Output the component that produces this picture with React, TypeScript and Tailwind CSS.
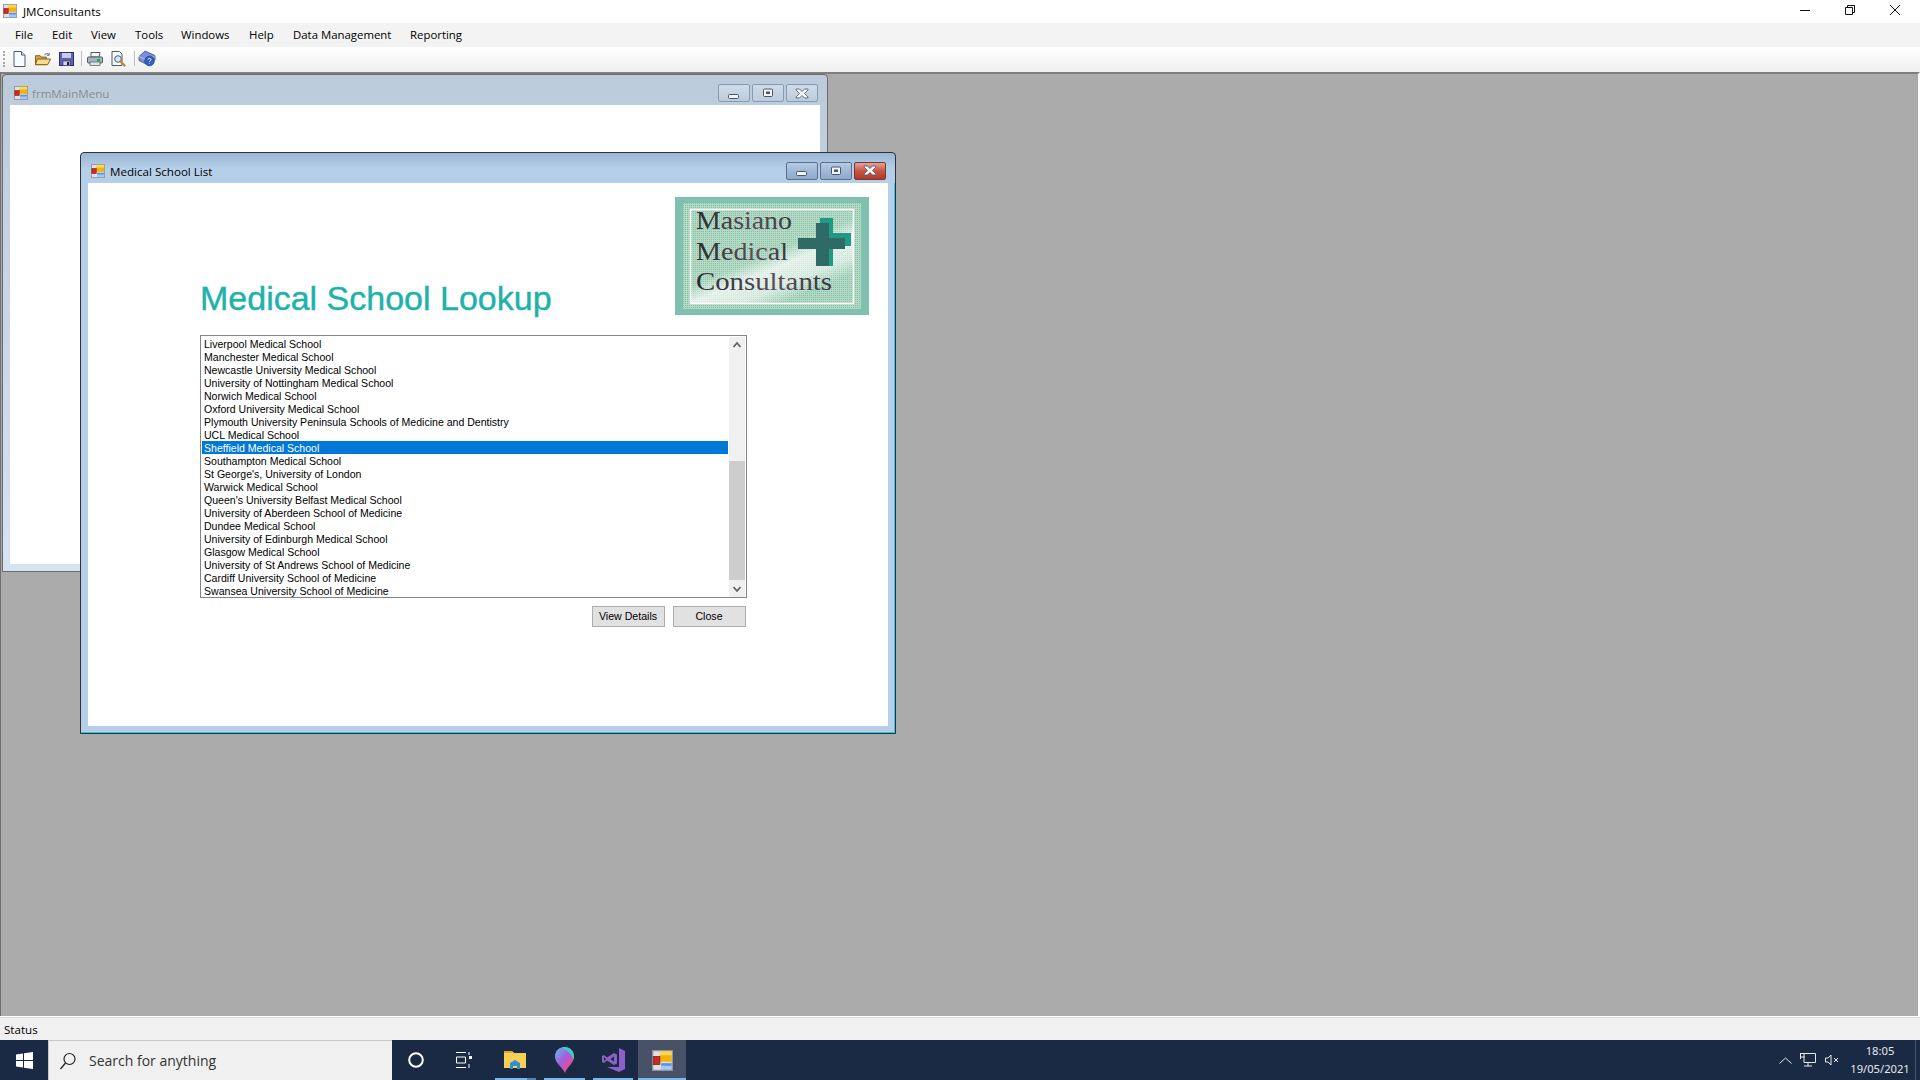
import React from "react";

const schools = [
  "Liverpool Medical School",
  "Manchester Medical School",
  "Newcastle University Medical School",
  "University of Nottingham Medical School",
  "Norwich Medical School",
  "Oxford University Medical School",
  "Plymouth University Peninsula Schools of Medicine and Dentistry",
  "UCL Medical School",
  "Sheffield Medical School",
  "Southampton Medical School",
  "St George's, University of London",
  "Warwick Medical School",
  "Queen's University Belfast Medical School",
  "University of Aberdeen School of Medicine",
  "Dundee Medical School",
  "University of Edinburgh Medical School",
  "Glasgow Medical School",
  "University of St Andrews School of Medicine",
  "Cardiff University School of Medicine",
  "Swansea University School of Medicine",
];

const menus: [string, string][] = [
  ["File", "w-[37px]"],
  ["Edit", "w-[39px]"],
  ["View", "w-[44px]"],
  ["Tools", "w-[46px]"],
  ["Windows", "w-[68px]"],
  ["Help", "w-[44px]"],
  ["Data Management", "w-[117px]"],
  ["Reporting", "w-[80px]"],
];

function AppIcon({ size = 14 }: { size?: number }) {
  return (
    <svg width={size} height={size} viewBox="0 0 16 16" className="shrink-0">
      <rect x="0.5" y="0.5" width="15" height="15" fill="#dfe1e4" stroke="#8f9499" />
      <rect x="6" y="1" width="9" height="8" fill="#f2b40c" />
      <rect x="6" y="1" width="9" height="3" fill="#f9d75a" />
      <rect x="1" y="5" width="5" height="6" fill="#cc2a20" stroke="#8d1a14" strokeWidth="0.6" />
      <rect x="7" y="10" width="8" height="5" fill="#5b93e3" />
      <rect x="7" y="12" width="8" height="3" fill="#a7c8f2" />
    </svg>
  );
}

function CaptionGlyph({ kind, dim }: { kind: "min" | "max" | "close"; dim?: boolean }) {
  const stroke = dim ? "#5f6d85" : "#465570";
  if (kind === "min")
    return (
      <svg width="12" height="8" viewBox="0 0 12 8" className="mt-[7px]">
        <rect x="0.5" y="1.5" width="10" height="4" rx="1" fill="#f3f4f6" stroke={stroke} />
      </svg>
    );
  if (kind === "max")
    return (
      <svg width="12" height="10" viewBox="0 0 12 10">
        <rect x="1.5" y="1" width="9" height="7.5" rx="1" fill="#f3f4f6" stroke={stroke} />
        <rect x="4" y="3.5" width="4" height="2.5" fill={stroke} />
      </svg>
    );
  return (
    <svg width="14" height="11" viewBox="0 0 14 11">
      <path
        d="M1 1h3.5L7 3.5 9.5 1H13v1l-3.5 3.5L13 9v1H9.5L7 7.5 4.5 10H1V9l3.5-3.5L1 2z"
        fill="#f3f4f6"
        stroke={stroke}
        strokeWidth="0.8"
      />
    </svg>
  );
}

function CaptionButtons({ active }: { active?: boolean }) {
  const base =
    "h-[18px] w-[32px] rounded-[2px] border flex items-center justify-center";
  const normal = active
    ? "border-[#5a6f8f] bg-gradient-to-b from-[#b5cbe3] via-[#9fb8d5] to-[#8eabcc]"
    : "border-[#8a9ab3] bg-gradient-to-b from-[#cfdbe8] to-[#bccbdc]";
  const close = active
    ? "border-[#6f3a3a] bg-gradient-to-b from-[#e2a396] via-[#c8543f] to-[#b23a26]"
    : normal;
  return (
    <div className="flex gap-[2px]">
      <div className={`${base} ${normal}`}>
        <CaptionGlyph kind="min" />
      </div>
      <div className={`${base} ${normal}`}>
        <CaptionGlyph kind="max" />
      </div>
      <div className={`${base} ${close}`}>
        <CaptionGlyph kind="close" />
      </div>
    </div>
  );
}

function Logo() {
  return (
    <svg width="194" height="118" viewBox="0 0 194 118" className="block">
      <defs>
        <pattern id="dots" width="2" height="2" patternUnits="userSpaceOnUse">
          <rect width="2" height="2" fill="#b4d9c5" />
          <rect width="1" height="1" fill="#80c0a2" />
        </pattern>
        <linearGradient id="sheen" x1="0.2" y1="0.1" x2="0.85" y2="1">
          <stop offset="0" stopColor="#ffffff" stopOpacity="0" />
          <stop offset="0.42" stopColor="#ffffff" stopOpacity="0.05" />
          <stop offset="0.55" stopColor="#ffffff" stopOpacity="0.7" />
          <stop offset="0.72" stopColor="#ffffff" stopOpacity="0.55" />
          <stop offset="0.85" stopColor="#ffffff" stopOpacity="0" />
        </linearGradient>
        <linearGradient id="ink" x1="0" y1="0" x2="1" y2="0">
          <stop offset="0" stopColor="#2b2a30" />
          <stop offset="0.6" stopColor="#5c4c58" />
          <stop offset="1" stopColor="#3a3540" />
        </linearGradient>
      </defs>
      <rect width="194" height="118" fill="#7fc0ae" />
      <rect x="8" y="6" width="178" height="106" fill="url(#dots)" />
      <rect x="15.5" y="12.5" width="163" height="94" fill="url(#dots)" stroke="#ffffff" strokeWidth="1.5" />
      <rect x="16" y="13" width="162" height="93" fill="url(#sheen)" />
      <path d="M145 21h13v15h18v13h-18v20h-13z" fill="#1f9a85" />
      <path d="M141 26h13v15h16v11h-16v17h-13V52h-18V41h18z" fill="#2f6a66" />
      <g fontFamily="'Liberation Serif', serif" fontSize="25" fill="url(#ink)">
        <text x="21" y="32" textLength="96" lengthAdjust="spacingAndGlyphs">Masiano</text>
        <text x="21" y="63" textLength="92" lengthAdjust="spacingAndGlyphs">Medical</text>
        <text x="21" y="93" textLength="136" lengthAdjust="spacingAndGlyphs">Consultants</text>
      </g>
    </svg>
  );
}

function Tool({ children }: { children: React.ReactNode }) {
  return <div className="w-[16px] h-[16px] flex items-center justify-center">{children}</div>;
}

function Toolbar() {
  return (
    <div className="h-[25px] bg-gradient-to-b from-white to-[#efefef] flex items-center pl-[3px] pb-[2px]">
      <div className="w-[2px] h-[16px] border-l-2 border-dotted border-[#a9a9a9] mr-[6px]" />
      <div className="mr-[8px]">
        <Tool>
          <svg width="13" height="16" viewBox="0 0 13 16">
            <path d="M1 .5h7.5L12 4v11.5H1z" fill="#f7fbff" stroke="#4d5b6e" />
            <path d="M8.5.5V4H12" fill="#dde6ef" stroke="#4d5b6e" />
          </svg>
        </Tool>
      </div>
      <div className="mr-[7px]">
        <Tool>
          <svg width="17" height="14" viewBox="0 0 17 14">
            <path d="M.5 3.5h5l1 1.500h5.500v8H.5z" fill="#d9a83e" stroke="#7b5d16" />
            <path d="M2.500 7h14l-3 6H.5z" fill="#f6d98a" stroke="#7b5d16" />
            <path d="M10 3c1-2 3-2 4.500-1M15 .5v2.500h-2.500" fill="none" stroke="#4d5b6e" />
          </svg>
        </Tool>
      </div>
      <div className="mr-[7px]">
        <Tool>
          <svg width="15" height="14" viewBox="0 0 15 14">
            <rect x=".5" y=".5" width="14" height="13" fill="#5f62b5" stroke="#2c2e70" />
            <rect x="3" y="1" width="9" height="5" fill="#c9cbe8" />
            <rect x="4" y="9" width="7" height="4.500" fill="#d8d8d8" stroke="#2c2e70" strokeWidth=".6" />
            <rect x="8" y="10" width="2" height="3" fill="#222" />
          </svg>
        </Tool>
      </div>
      <div className="w-px h-[15px] bg-[#bfbfbf] mr-[5px]" />
      <div className="mr-[8px]">
        <Tool>
          <svg width="16" height="14" viewBox="0 0 16 14">
            <path d="M4 .5h9L12 5H4z" fill="#f4f6f8" stroke="#4d5b6e" />
            <rect x=".5" y="5" width="15" height="6" rx="1" fill="#aab4bf" stroke="#4d5b6e" />
            <rect x="3" y="10" width="10" height="3.500" fill="#dfe3e8" stroke="#4d5b6e" strokeWidth=".7" />
            <rect x="10" y="7" width="3" height="2.500" fill="#17b52c" />
          </svg>
        </Tool>
      </div>
      <div className="mr-[7px]">
        <Tool>
          <svg width="16" height="16" viewBox="0 0 16 16">
            <path d="M1 .5h7.500L11 3v11.500H1z" fill="#f7fbff" stroke="#4d5b6e" />
            <circle cx="7" cy="8" r="3.300" fill="#dbe6ee" stroke="#53606e" />
            <path d="M9.500 10.500l4 4" stroke="#c2852e" strokeWidth="2.400" strokeLinecap="round" />
          </svg>
        </Tool>
      </div>
      <div className="w-px h-[15px] bg-[#bfbfbf] mr-[4px]" />
      <Tool>
        <svg width="18" height="17" viewBox="0 0 18 17" className="shrink-0">
          <path d="M1 6.500L7 1l10 4.500v4L11 15.500 1 10.500z" fill="#7d8fd4" stroke="#3b4a8f" strokeWidth=".8" />
          <path d="M1 6.500l10 5 6-6" fill="none" stroke="#c4cdef" strokeWidth=".8" />
          <circle cx="11.500" cy="11" r="4.800" fill="#2f62c9" stroke="#1e3f8a" strokeWidth=".7" />
          <path d="M10 9.500c.3-1.500 3-1.400 3 .1 0 1.100-1.500 1.100-1.500 2.200M11.500 13.200v.5" fill="none" stroke="#fff" strokeWidth="1" />
        </svg>
      </Tool>
    </div>
  );
}

function MainMenuWindow() {
  return (
    <div className="absolute left-[1px] top-0 w-[826px] h-[498px] rounded-t-[4px] border border-[#6a6a6a] bg-gradient-to-b from-[#bccbdb] to-[#d6e3f0] px-[7px] pb-[7px] flex flex-col">
      <div className="h-[30px] shrink-0 flex items-center justify-between pr-[2px] pt-[6px]">
        <div className="flex items-center gap-[4px] ml-[4px] mt-[1px] font-['Open_Sans',sans-serif] text-[11.6px] text-[#878d95]">
          <AppIcon />
          <span>frmMainMenu</span>
        </div>
        <CaptionButtons />
      </div>
      <div className="flex-1 bg-white" />
    </div>
  );
}

function SchoolList() {
  return (
    <div className="w-[547px] h-[263px] border border-[#82848c] bg-white flex pt-[1px] pl-[1px]">
      <div className="w-[526px] font-['Liberation_Sans',sans-serif] text-[10.55px] leading-[15px] text-black">
        {schools.map((s, i) => (
          <div
            key={s}
            className={`h-[13px] pl-[2px] whitespace-nowrap ${i === 8 ? "bg-[#0078d7] text-white" : ""}`}
          >
            {s}
          </div>
        ))}
      </div>
      <div className="ml-px w-[16px] h-[260px] bg-[#f0f0f0] flex flex-col items-center">
        <svg width="16" height="17" viewBox="0 0 16 17" className="shrink-0">
          <path d="M4.500 10l3.500-4 3.500 4" fill="none" stroke="#606060" strokeWidth="1.700" />
        </svg>
        <div className="mt-[107px] h-[119px] w-full bg-[#cdcdcd]" />
        <svg width="16" height="17" viewBox="0 0 16 17" className="shrink-0">
          <path d="M4.500 7l3.500 4 3.500-4" fill="none" stroke="#606060" strokeWidth="1.700" />
        </svg>
      </div>
    </div>
  );
}

function SchoolWindow() {
  const btn =
    "w-[73px] h-[21px] border border-[#adadad] bg-[#e1e1e1] text-[10.6px] text-black font-['Liberation_Sans',sans-serif] flex items-center justify-center pt-px pr-px";
  return (
    <div className="absolute left-[79px] top-[78px] w-[816px] h-[582px] rounded-t-[4px] border border-[#26323c] bg-gradient-to-b from-[#9cb6d1] via-[#b6cfe9] to-[#b6cfe9] bg-[length:100%_32px] bg-no-repeat flex flex-col">
      <div className="h-[30px] shrink-0 flex items-center justify-between pl-[7px] pr-[9px] pt-[5px]">
        <div className="flex items-center gap-[5px] ml-[3px] mt-[2px] font-['Open_Sans',sans-serif] text-[11.6px] text-black">
          <AppIcon />
          <span>Medical School List</span>
        </div>
        <CaptionButtons active />
      </div>
      <div className="flex-1 bg-[#b6cfe9] pl-[7px] pr-[7px] pb-[7px] flex shadow-[inset_-1px_-1px_0_#2cc8e0]">
        <div className="flex-1 bg-white relative">
          <div className="flex justify-end pt-[14px] pr-[19px]">
            <Logo />
          </div>
          <div className="pl-[112px] -mt-[37px] h-[41px] font-['Liberation_Sans',sans-serif] text-[34px] leading-[41px] text-[#20b2aa] whitespace-nowrap [-webkit-text-stroke:0.4px_#20b2aa]">
            Medical School Lookup
          </div>
          <div className="pl-[112px] mt-[16px]">
            <SchoolList />
            <div className="w-[547px] flex justify-end gap-[8px] mt-[8px] pr-px">
              <div className={btn}>View Details</div>
              <div className={btn}>Close</div>
            </div>
          </div>
        </div>
      </div>
    </div>
  );
}

function Taskbar() {
  return (
    <div className="h-[40px] bg-[#1a2a44] flex items-stretch relative font-['Open_Sans',sans-serif]">
      <div className="w-[48px] flex items-center justify-center">
        <svg width="17" height="17" viewBox="0 0 17 17">
          <path d="M0 2.400l7-1v6.600H0zM8 1.200L17 0v8H8zM0 9h7v6.600l-7-1zM8 9h9v8l-9-1.200z" fill="#ffffff" />
        </svg>
      </div>
      <div className="w-[344px] bg-[#f0f0f0] border-t border-l border-[#c8c8c8] flex items-center pl-[10px]">
        <svg width="18" height="18" viewBox="0 0 18 18">
          <circle cx="10.500" cy="7" r="5.500" fill="none" stroke="#222" strokeWidth="1.200" />
          <path d="M6.500 11L1.500 17" stroke="#222" strokeWidth="1.300" />
        </svg>
        <span className="ml-[12px] text-[14px] text-[#333] whitespace-nowrap">Search for anything</span>
      </div>
      <div className="w-[48px] flex items-center justify-center">
        <svg width="16" height="16" viewBox="0 0 16 16">
          <circle cx="8" cy="8" r="6.800" fill="none" stroke="#ffffff" strokeWidth="2" />
        </svg>
      </div>
      <div className="w-[47px] flex items-center justify-center">
        <svg width="16" height="16" viewBox="0 0 16 16">
          <path d="M0 .5h10M0 15.500h10M.5 5v6h9V5zM13 0v3M13 12v4" fill="none" stroke="#fff" />
          <rect x="13" y="4" width="3" height="3" fill="#fff" />
        </svg>
      </div>
      <div className="w-[41px] ml-[8px] relative flex items-center justify-center pr-[2px]">
        <svg width="24" height="20" viewBox="0 0 24 20">
          <path d="M1 1h8l2 2h12v15H1z" fill="#f6cf57" />
          <path d="M1 1h8l2 2H1z" fill="#e0a82f" />
          <path d="M7 13l5-3 5 3v6h-3v-3h-4v3H7z" fill="#2f8ed8" />
        </svg>
        <div className="absolute left-0 right-[9px] bottom-0 h-[2px] bg-[#76b9ed]" />
        <div className="absolute right-0 w-[9px] bottom-0 h-[2px] bg-[#4f86b0]" />
      </div>
      <div className="w-[41px] ml-[8px] relative flex items-center justify-center pr-[1px]">
        <svg width="19" height="26" viewBox="0 0 19 26">
          <defs>
            <linearGradient id="pin" x1="0" y1="0" x2="1" y2="1">
              <stop offset="0" stopColor="#58c5e8" />
              <stop offset=".45" stopColor="#a45de0" />
              <stop offset=".8" stopColor="#ee4a8f" />
              <stop offset="1" stopColor="#f5a623" />
            </linearGradient>
          </defs>
          <path d="M9.500 0C15 0 19 4 19 9.500 19 16 12 20 10 26 7 20 0 16 0 9.500 0 4 4 0 9.500 0z" fill="url(#pin)" />
          <path d="M9.500 0C15 0 19 4 19 9.500c0 1-.2 2-.5 3C16 6 11 3 7 .4 8 .1 8.700 0 9.500 0z" fill="#35d0c9" />
        </svg>
        <div className="absolute left-0 right-0 bottom-0 h-[2px] bg-[#76b9ed]" />
      </div>
      <div className="w-[40px] ml-[8px] relative flex items-center justify-center">
        <svg width="25" height="24" viewBox="0 0 25 24">
          <path d="M18 0l6 3v18l-6 3L6 19h12zM18 5v10V5z" fill="#8d5fc9" />
          <path d="M1 8l2-1 3 2.500L13 5l3 1.500v9L13 17l-7-4.500L3 15l-2-1z" fill="#8d5fc9" />
          <path d="M3 9v4l2-2zM13 8.500L9.500 11l3.500 2.500z" fill="#1a2a44" />
        </svg>
        <div className="absolute left-0 right-0 bottom-0 h-[2px] bg-[#76b9ed]" />
      </div>
      <div className="w-[48px] ml-[5px] relative bg-[#475268] flex items-center justify-center">
        <AppIcon size={21} />
        <div className="absolute left-0 right-0 bottom-0 h-[2px] bg-[#76b9ed]" />
      </div>
      <div className="flex-1" />
      <div className="w-[20px] flex items-center justify-center">
        <svg width="13" height="7" viewBox="0 0 13 7">
          <path d="M.5 6.500L6.500 1l6 5.500" fill="none" stroke="#e8e8e8" />
        </svg>
      </div>
      <div className="w-[26px] flex items-center justify-center">
        <svg width="16" height="14" viewBox="0 0 16 14">
          <path d="M.5 3V.5h15v9H4V3zM.5 3v3M4 13h8M8 9.500V13" fill="none" stroke="#e8e8e8" />
          <rect x=".5" y=".5" width="3.500" height="3.500" fill="#1a2a44" stroke="#e8e8e8" />
        </svg>
      </div>
      <div className="w-[22px] flex items-center justify-center">
        <svg width="15" height="12" viewBox="0 0 15 12">
          <path d="M.5 4v4h2.500L6 11V1L3 4z" fill="none" stroke="#e8e8e8" />
          <path d="M9 4l4 4M13 4l-4 4" stroke="#e8e8e8" />
        </svg>
      </div>
      <div className="w-[68px] ml-[3px] flex flex-col justify-center items-center leading-[18px] text-[#e8e8e8] font-['Noto_Sans',sans-serif]">
        <span className="text-[11.2px]">18:05</span>
        <span className="text-[11.2px]">19/05/2021</span>
      </div>
      <div className="w-px bg-[#4a5568] ml-[1px] mr-[4px]" />
    </div>
  );
}

export default function App() {
  return (
    <div className="w-[1920px] h-[1080px] overflow-hidden bg-white flex flex-col font-['Open_Sans',sans-serif] text-[12px] text-black">
      <div className="h-[23px] bg-white flex items-center justify-between shrink-0">
        <div className="flex items-center gap-[6px] pl-[3px]">
          <AppIcon />
          <span className="text-[11.6px]">JMConsultants</span>
        </div>
        <div className="flex items-center -mt-[3px]">
          <div className="w-[45px] flex justify-center">
            <svg width="10" height="10" viewBox="0 0 10 10">
              <path d="M0 5.500h10" stroke="#111" />
            </svg>
          </div>
          <div className="w-[45px] flex justify-center">
            <svg width="10" height="10" viewBox="0 0 10 10">
              <path d="M.5 2.500h7v7h-7zM2.500 2.500v-2h7v7h-2" fill="none" stroke="#111" />
            </svg>
          </div>
          <div className="w-[45px] flex justify-center">
            <svg width="10" height="10" viewBox="0 0 10 10">
              <path d="M0 0l10 10M10 0L0 10" stroke="#111" />
            </svg>
          </div>
          <div className="w-[3px]" />
        </div>
      </div>
      <div className="h-[24px] bg-[#f3f3f3] flex items-center pl-[15px] shrink-0 text-[11.4px]">
        {menus.map(([m, w]) => (
          <div key={m} className={`${w} whitespace-nowrap`}>
            {m}
          </div>
        ))}
      </div>
      <div className="shrink-0">
        <Toolbar />
      </div>
      <div className="flex-1 relative bg-[#ababab] border-t-2 border-t-[#7f7f7f] border-l border-l-[#6f6f6f] border-r-2 border-r-white">
        <MainMenuWindow />
        <SchoolWindow />
      </div>
      <div className="h-[24px] shrink-0 bg-[#f0f0f0] border-t border-t-white shadow-[inset_0_1px_0_#dcdcdc] flex items-center pl-[4px] pt-[2px] text-[11.6px]">
        Status
      </div>
      <Taskbar />
    </div>
  );
}
